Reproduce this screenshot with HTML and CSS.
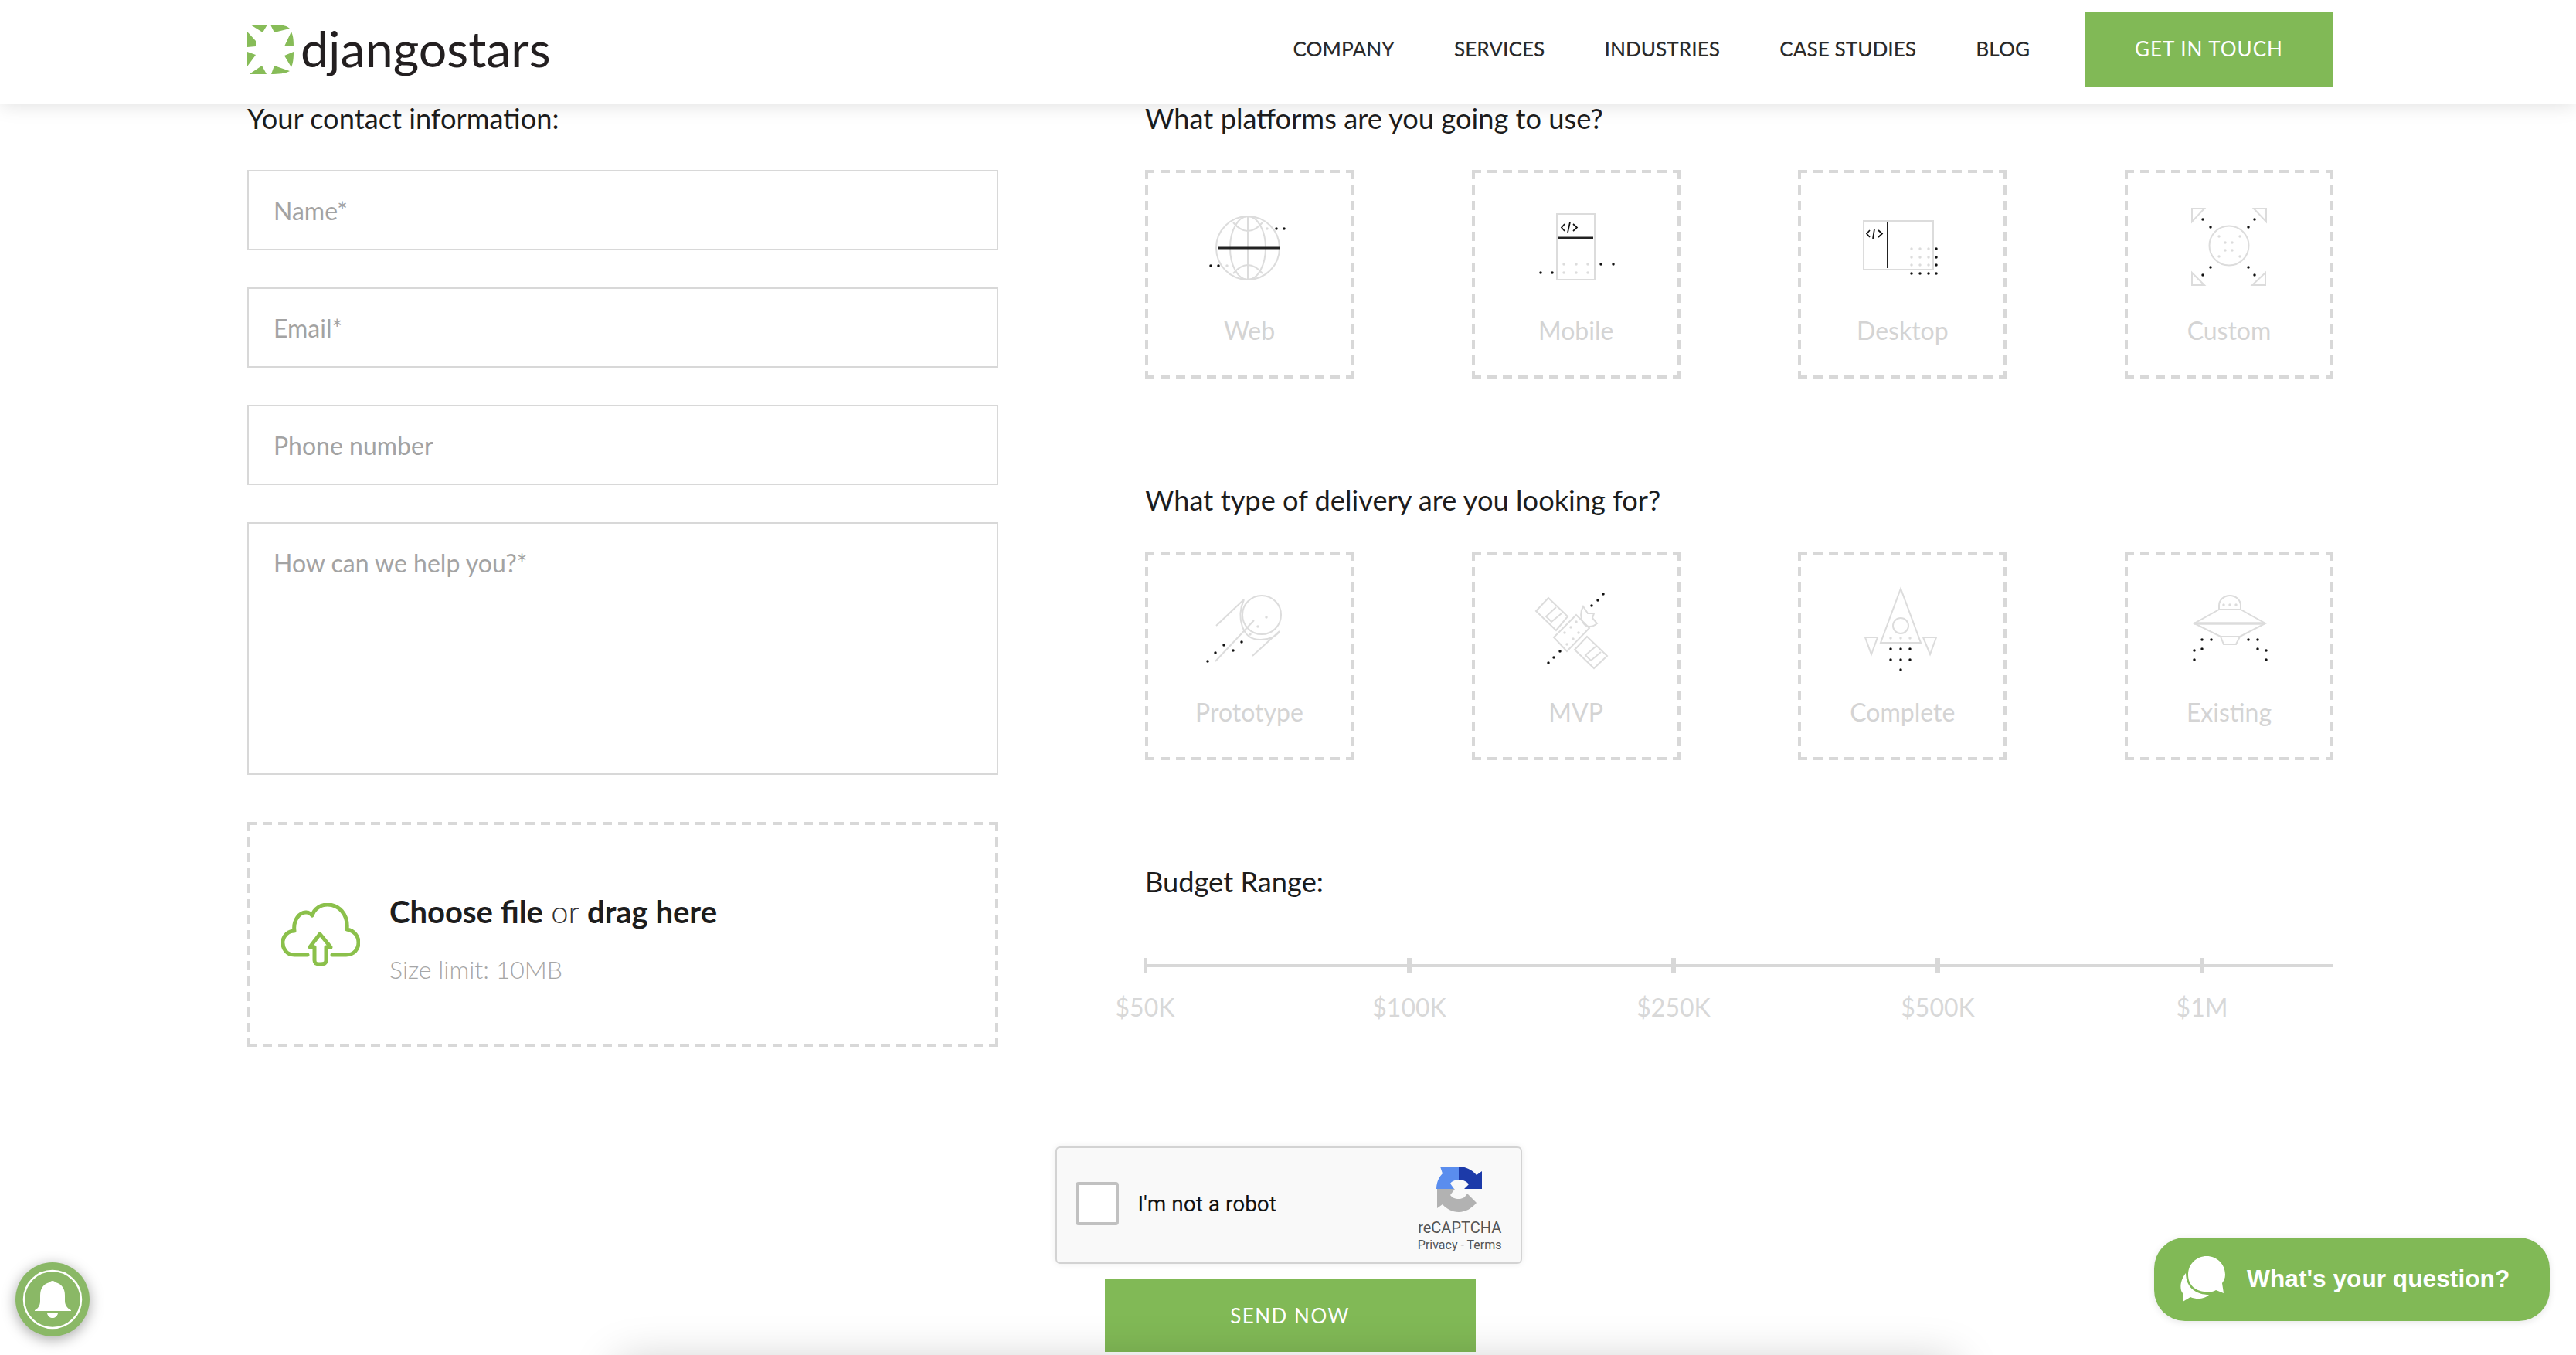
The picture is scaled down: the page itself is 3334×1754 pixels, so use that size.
FILE: index.html
```html
<!DOCTYPE html>
<html lang="en">
<head>
<meta charset="utf-8">
<title>Django Stars - Contact</title>
<link rel="stylesheet" href="styles.css">
</head>
<body>
<header class="header">
  <a class="logo">
    <svg class="logo-mark" viewBox="0 0 60 64">
      <path d="M4 0H26L20 10ZM30 0H38C46 0 52 2 55 5L35 10ZM57 9C60 15 60 24 60 28L48 28 ZM0 9L11 21 11 28 0 29ZM0 35L11 39 0 54ZM60 35C60 45 59 50 57 55L48 40ZM4 63L19 53 25 64 4 64ZM31 64L35 53 55 60C50 63 40 64 31 64Z" fill="#87bc58"/>
    </svg>
    <span class="logo-text">djangostars</span>
  </a>
  <nav class="nav">
    <a class="nav-link">COMPANY</a>
    <a class="nav-link">SERVICES</a>
    <a class="nav-link">INDUSTRIES</a>
    <a class="nav-link">CASE STUDIES</a>
    <a class="nav-link">BLOG</a>
  </nav>
  <a class="cta">GET IN TOUCH</a>
</header>

<main class="main">
  <div class="form-grid">
    <section class="contact">
      <h2 class="heading">Your contact information:</h2>
      <div class="fields">
        <input class="field" type="text" placeholder="Name*">
        <input class="field" type="text" placeholder="Email*">
        <input class="field" type="text" placeholder="Phone number">
        <textarea class="field field-area" placeholder="How can we help you?*"></textarea>
      </div>
      <div class="upload dashed">
        <svg class="cloud" viewBox="0 0 102 82">
          <path d="M34 67H17C7 67 1 59 2 49C3 42 9 36 17 36C15 22 24 11 33 12C36 12 38 14 40 16C43 7 51 2 60 2C74 2 87 14 85 34C95 36 100 43 100 51C100 60 94 67 84 67H66" />
          <path d="M50 40L37 57H43V74C43 78 45 79 50 79C56 79 58 78 58 74V57H64Z" />
        </svg>
        <div class="upload-copy">
          <p class="upload-title"><b>Choose file</b> <span>or</span> <b>drag here</b></p>
          <p class="upload-limit">Size limit: 10MB</p>
        </div>
      </div>
    </section>

    <section class="options">
      <h2 class="heading">What platforms are you going to use?</h2>
      <div class="cards">
        <div class="card dashed">
          <svg class="card-icon" viewBox="0 0 270 170">
            <g class="ln"><circle cx="133" cy="101" r="41"/><ellipse cx="133" cy="101" rx="23" ry="41"/><path d="M133 60V142M114 68Q133 90 152 68M114 134Q133 112 152 134"/></g>
            <path class="bar" d="M94 101H175"/>
            <path class="dot-g" d="M158 76h0M106 124h0"/>
            <path class="dot-k" d="M170 76h0M180 76h0M85 124h0M95 124h0"/>
          </svg>
          <span class="card-label">Web</span>
        </div>
        <div class="card dashed">
          <svg class="card-icon" viewBox="0 0 270 170">
            <rect class="ln" x="110" y="57" width="49" height="85"/>
            <path class="bar" d="M112 88H157"/>
            <path class="code" d="M120 70L116 74.500 120 79M127 67.500L124 81M131 70L136 74.500 131 79"/>
            <path class="dot-g" d="M119 122h0M135 122h0M150 122h0M119 133h0M135 133h0M150 133h0"/>
            <path class="dot-k" d="M167 122h0M183 122h0M89 133h0M104 133h0"/>
          </svg>
          <span class="card-label">Mobile</span>
        </div>
        <div class="card dashed">
          <svg class="card-icon" viewBox="0 0 270 170">
            <rect class="ln" x="85" y="66" width="90" height="63"/>
            <path class="bar-thin" d="M116 67V127"/>
            <path class="code" d="M93 78L89 82.500 93 87M99 76.500L97 89M104 78L109 82.500 104 87"/>
            <path class="dot-g" d="M147 102h0M158 102h0M169 102h0M147 113h0M158 113h0M169 113h0M147 123h0M158 123h0M169 123h0"/>
            <path class="dot-k" d="M179 102h0M179 113h0M179 123h0M179 134h0M147 134h0M158 134h0M169 134h0"/>
          </svg>
          <span class="card-label">Desktop</span>
        </div>
        <div class="card dashed">
          <svg class="card-icon" viewBox="0 0 270 170">
            <g class="ln"><circle cx="135" cy="98" r="25.500"/><path d="M87 50H103L87 67ZM167 50H183V67ZM87 133L103 149H87ZM182 133V149H165Z"/></g>
            <path class="dot-g" d="M122 86h0M149 86h0M130 94h0M139 94h0M130 104h0M139 104h0M122 112h0M149 112h0"/>
            <path class="dot-k" d="M101 64h0M111 74h0M168 64h0M160 74h0M111 126h0M101 136h0M160 126h0M168 136h0"/>
          </svg>
          <span class="card-label">Custom</span>
        </div>
      </div>

      <h2 class="heading">What type of delivery are you looking for?</h2>
      <div class="cards">
        <div class="card dashed">
          <svg class="card-icon" viewBox="0 0 270 170">
            <g class="ln"><circle cx="151" cy="82" r="25"/><path d="M128 62C118 85 125 115 150 114C160 114 170 110 174 103M128 62L92 96M141 89L91 142M174 103L139 135"/></g>
            <path class="dot-g" d="M157 85h0M146 97h0M136 107h0"/>
            <path class="dot-k" d="M125 117h0M114 128h0M102 121h0M91 131h0M81 142h0"/>
          </svg>
          <span class="card-label">Prototype</span>
        </div>
        <div class="card dashed">
          <svg class="card-icon" viewBox="0 0 270 170">
            <g class="ln"><path d="M99 60L124 84 109 102 83 77ZM135 82L152 99 123 129 106 111ZM149 110L175 135 158 151 133 127ZM109 72L96 84 103 91 116 80M160 123L147 134 154 141 167 130M144 71C136 85 146 106 162 93L156 86 158 80 150 80Z"/></g>
            <path class="dot-g" d="M135 91h0M128 98h0M138 105h0M120 105h0M131 113h0M123 120h0"/>
            <path class="dot-k" d="M170 55h0M163 63h0M155 70h0M114 129h0M106 137h0M99 144h0"/>
          </svg>
          <span class="card-label">MVP</span>
        </div>
        <div class="card dashed">
          <svg class="card-icon" viewBox="0 0 270 170">
            <g class="ln"><path d="M133 48L159 118H107ZM87 111H103L95 133ZM162 111H179L171 133Z"/><circle cx="133" cy="96" r="10"/></g>
            <path class="dot-g" d="M120 112h0M133 112h0M145 112h0"/>
            <path class="dot-k" d="M120 126h0M133 126h0M145 126h0M120 140h0M133 140h0M145 140h0M133 153h0"/>
          </svg>
          <span class="card-label">Complete</span>
        </div>
        <div class="card dashed">
          <svg class="card-icon" viewBox="0 0 270 170">
            <g class="ln"><path d="M122 75V70A14 13 0 0 1 150 70V75ZM122 75L90 93 124 110H149L182 93 150 75M124 110L128 120H144L149 110"/></g>
            <path class="ln-thick" d="M90 93H182"/>
            <path class="dot-g" d="M128 69h0M136 69h0M144 69h0"/>
            <path class="dot-k" d="M100 114h0M112 114h0M100 126h0M90 128h0M90 140h0M160 114h0M172 114h0M172 126h0M183 128h0M183 140h0"/>
          </svg>
          <span class="card-label">Existing</span>
        </div>
      </div>

      <h2 class="heading">Budget Range:</h2>
      <div class="slider">
        <div class="stop stop-first"><span class="stop-label">$50K</span></div>
        <div class="stop"><span class="stop-label">$100K</span></div>
        <div class="stop"><span class="stop-label">$250K</span></div>
        <div class="stop"><span class="stop-label">$500K</span></div>
        <div class="stop"><span class="stop-label">$1M</span></div>
      </div>
    </section>
  </div>

  <div class="submit">
    <div class="captcha">
      <span class="captcha-box"></span>
      <span class="captcha-text">I'm not a robot</span>
      <div class="captcha-brand">
        <svg class="captcha-logo" viewBox="0 0 60 60">
          <path d="M1 30V55L8 50C13 56 21 60 29 60C38 60 46 55 52 48L40 36C37 41 34 43 29 43C24 43 20 41 18 38L24 30Z" fill="#b2b2b2"/>
          <path d="M0 30C0 22 3 15 8 10L5 1H29V19C24 18 20 20 18 23L23 30Z" fill="#5a8dee"/>
          <path d="M29 1C38 1 46 5 52 12L59 7V30H36L42 24C39 20 35 18 29 19Z" fill="#1c3aa9"/>
        </svg>
        <span class="captcha-name">reCAPTCHA</span>
        <span class="captcha-links">Privacy - Terms</span>
      </div>
    </div>
    <button class="send" type="button">SEND NOW</button>
  </div>
</main>

<div class="bottom-shade"></div>

<a class="bell">
  <svg viewBox="0 0 96 96">
    <circle cx="48" cy="48" r="37" fill="none" stroke="#fff" stroke-width="2.500"/>
    <path d="M48 24C50 24 51 25 52 26C60 28 64 34 64 43V50C64 56 68 60 72 62V63H25V62C29 60 32 56 32 50V43C32 34 36 28 44 26C45 25 46 24 48 24ZM41 66H55C54 70 51 72 48 72C45 72 42 70 41 66Z" fill="#fff"/>
  </svg>
</a>

<a class="chat">
  <svg class="chat-icon" viewBox="0 0 58 60">
    <path d="M7 22C-1 32-1 44 3 48L3 59L13 53C22 57 32 55 37 50C22 50 7 42 7 22Z" fill="#fff"/>
    <path d="M34 0C47 0 58 10 58 24C58 29 56 32 54 35L56 48L46 44C43 46 38 47 34 46C20 46 10 38 10 24C10 10 21 0 34 0Z" fill="#fff"/>
  </svg>
  <span class="chat-text">What's your question?</span>
</a>
</body>
</html>
```
FILE: styles.css
```css
* { box-sizing: border-box; }
html, body { margin: 0; height: 1754px; overflow: hidden; background: #fff; }
body { font-family: "Lato", sans-serif; color: #1d1d1d; position: relative; }

.header {
  position: relative;
  z-index: 5;
  height: 134px;
  padding: 16px 314px 22px 320px;
  display: flex;
  align-items: center;
  background: #fff;
  box-shadow: 0 2px 24px rgba(0, 0, 0, .13);
}
.logo { display: flex; align-items: center; gap: 9px; }
.logo-mark { width: 60px; height: 64px; }
.logo-text { font-size: 64.500px; line-height: 64px; color: #231f20; position: relative; top: -2px; }
.nav { margin-left: auto; display: flex; gap: 77.250px; margin-right: 71px; padding-bottom: 3px; }
.nav-link { font-size: 26.150px; font-weight: 500; color: #2a2a2a; }
.cta {
  width: 322px;
  height: 96px;
  padding-bottom: 3px;
  display: flex;
  align-items: center;
  justify-content: center;
  background: #81b956;
  color: #fff;
  font-size: 26px;
  letter-spacing: 1px;
}

.main { padding-left: 320px; width: 3020px; }
.form-grid { display: grid; grid-template-columns: 972px 1538px; column-gap: 190px; height: 1350px; }
.heading { margin: 0 0 48px; font-size: 36.250px; line-height: 38px; font-weight: 400; color: #1d1d1d; }

.fields { display: flex; flex-direction: column; gap: 48px; }
.field {
  display: block;
  width: 100%;
  height: 104px;
  padding: 0 32px;
  border: 2px solid #d8d8d8;
  border-radius: 0;
  outline: none;
  font: 400 32px "Lato", sans-serif;
  resize: none;
}
.field::placeholder { color: #a3a3a3; opacity: 1; }
.field-area { height: 327px; padding-top: 32px; line-height: 38px; }

.dashed {
  background-image:
    linear-gradient(90deg, #d8d8d8 12px, transparent 12px),
    linear-gradient(90deg, #d8d8d8 12px, transparent 12px),
    linear-gradient(#d8d8d8 12px, transparent 12px),
    linear-gradient(#d8d8d8 12px, transparent 12px);
  background-size: 20px 4px, 20px 4px, 4px 20px, 4px 20px;
  background-position: 0 0, 0 100%, 0 0, 100% 0;
  background-repeat: repeat-x, repeat-x, repeat-y, repeat-y;
}

.upload {
  margin-top: 61px;
  height: 291px;
  padding-left: 44px;
  display: flex;
  align-items: center;
  gap: 38px;
}
.cloud { width: 102px; height: 82px; fill: none; stroke: #8bc04b; stroke-width: 5; stroke-linecap: round; stroke-linejoin: round; }
.upload-copy { padding-top: 10px; }
.upload-title { margin: 0; font-size: 40px; line-height: 48px; }
.upload-title b { font-weight: 700; color: #1d1d1d; }
.upload-title span { font-weight: 300; color: #333; }
.upload-limit { margin: 32px 0 0; font-size: 32px; line-height: 38px; font-weight: 300; color: #a6a6a6; }

.cards { display: flex; justify-content: space-between; margin-bottom: 138px; }
.card { width: 270px; height: 270px; display: flex; flex-direction: column; align-items: center; }
.card-icon { width: 270px; height: 170px; flex: none; }
.card-label { margin-top: 18px; font-size: 32px; line-height: 40px; color: #d4d4d4; }

.ln, .ln-thick { fill: none; stroke: #dcdcdc; stroke-width: 2; }
.ln-thick { stroke-width: 3.500; }
.bar { fill: none; stroke: #222; stroke-width: 3; }
.bar-thin { fill: none; stroke: #222; stroke-width: 2; }
.code { fill: none; stroke: #111; stroke-width: 1.700; }
.dot-g, .dot-k { fill: none; stroke-width: 3.500; stroke-linecap: round; }
.dot-g { stroke: #dcdcdc; }
.dot-k { stroke: #111; }

.slider {
  margin-top: 80px;
  display: grid;
  grid-template-columns: repeat(4, 342px) 170px;
  background: linear-gradient(#d8d8d8, #d8d8d8) 0 8px / 100% 4px no-repeat;
}
.stop { position: relative; height: 64px; }
.stop::before {
  content: "";
  position: absolute;
  left: -3px;
  top: 0;
  width: 6px;
  height: 20px;
  background: #d8d8d8;
}
.stop-first::before { left: -2px; width: 4px; }
.stop-label {
  position: absolute;
  left: 0;
  top: 44px;
  transform: translateX(-50%);
  font-size: 32px;
  line-height: 40px;
  color: #d8d8d8;
}

.submit { display: flex; flex-direction: column; align-items: center; width: 2695px; margin-left: -320px; padding-left: 640px; }
.captcha {
  width: 604px;
  height: 152px;
  display: flex;
  align-items: center;
  padding: 0 24px 4px;
  background: #f9f9f9;
  border: 2px solid #d3d3d3;
  border-radius: 6px;
  box-shadow: 0 0 8px rgba(0, 0, 0, .08);
  font-family: "Roboto", sans-serif;
}
.captcha-box { width: 56px; height: 56px; background: #fff; border: 4px solid #c1c1c1; border-radius: 4px; flex: none; }
.captcha-text { margin-left: 25px; font-size: 28px; color: #111; }
.captcha-brand { margin-left: auto; padding-top: 16px; display: flex; flex-direction: column; align-items: center; }
.captcha-logo { width: 60px; height: 60px; margin-bottom: 8px; }
.captcha-name { font-size: 20px; line-height: 24px; color: #555; }
.captcha-links { font-size: 16px; line-height: 22px; color: #555; }
.send {
  margin-top: 20px;
  margin-left: 4px;
  width: 480px;
  height: 94px;
  border: 0;
  background: #81b956;
  color: #fff;
  font: 400 26px "Lato", sans-serif;
  letter-spacing: 1.500px;
}

.bottom-shade {
  position: absolute;
  left: 800px;
  top: 1764px;
  width: 1730px;
  height: 100px;
  z-index: 6;
  box-shadow: 0 0 60px rgba(0, 0, 0, .22);
}

.bell {
  position: absolute;
  left: 20px;
  top: 1634px;
  width: 96px;
  height: 96px;
  border-radius: 50%;
  background: #8ab866;
  box-shadow: 0 4px 18px rgba(0, 0, 0, .35);
  z-index: 7;
}
.bell svg { display: block; width: 96px; height: 96px; }

.chat {
  position: absolute;
  left: 2788px;
  top: 1602px;
  width: 512px;
  height: 108px;
  padding-left: 34px;
  display: flex;
  align-items: center;
  gap: 28px;
  border-radius: 40px;
  background: #81b956;
  box-shadow: 0 2px 10px rgba(0, 0, 0, .1);
  z-index: 7;
}
.chat-icon { width: 58px; height: 60px; flex: none; }
.chat-text { font: 700 31.700px "Liberation Sans", sans-serif; color: #fff; padding-bottom: 2px; }
```
